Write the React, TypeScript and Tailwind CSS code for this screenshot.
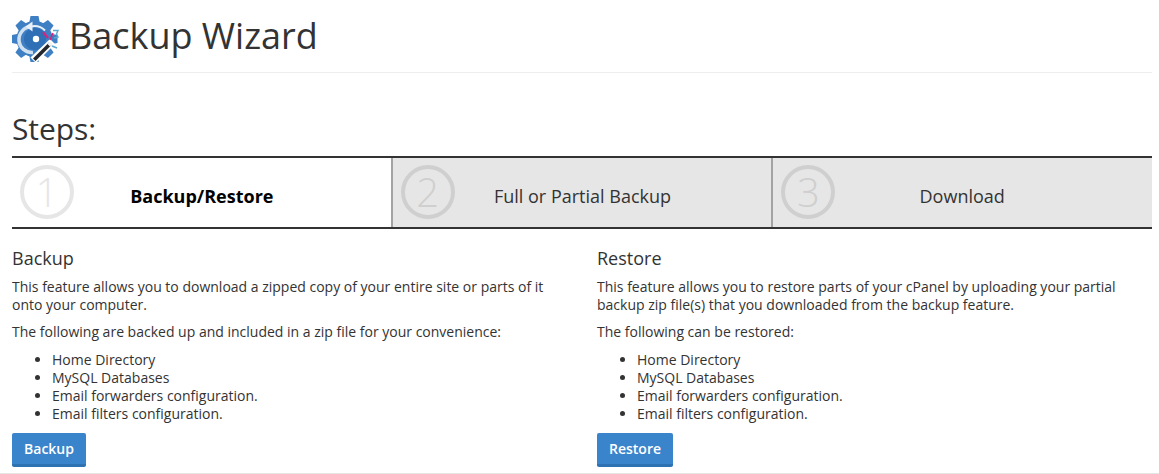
const font = { fontFamily: '"Open Sans", sans-serif' };

function GearIcon() {
  const teeth = [0, 45, 90, 135, 180, 225, 270, 315];
  return (
    <svg width="50" height="50" viewBox="0 0 50 50" className="mt-[4px] shrink-0">
      {teeth.map((a) => (
        <path key={a} d="M18.5 1h8l1.5 8h-11z" fill="#3f7fc4" transform={`rotate(${a} 22.5 24)`} />
      ))}
      <circle cx="22.5" cy="24" r="18" fill="#3f7fc4" />
      <circle cx="23" cy="24" r="11" fill="#2f6fb6" />
      <path d="M19 11.5A13 13 0 0 0 21 37.5" fill="none" stroke="#cfe0f1" strokeWidth="3.5" />
      <path d="M20.5 6.5v10l-7-5z" fill="#e8f0f8" />
      <path d="M19 11.5c5-1 10 0 14 4" fill="none" stroke="#e8f0f8" strokeWidth="2" />
      <circle cx="24" cy="24" r="3.2" fill="#fff" />
      <path d="M38 24l5 5L24 48l-5.500-5.500z" fill="#fff" />
      <path d="M37 27.500l2.500 2.500L23.500 46 21 43.500z" fill="#23262b" />
      <path d="M35.500 29l2.500 2.500 2.500-2.500-2.500-2.500z" fill="#f4f4f4" />
      <path d="M31 17l5 6" stroke="#d6247c" strokeWidth="2" fill="none" />
      <path d="M41 18l-3 7" stroke="#d6247c" strokeWidth="1.6" fill="none" />
      <path d="M41 15.500h5l-1.500 3.500 1.500 3-4 1" stroke="#58a9cf" strokeWidth="1.4" fill="none" />
      <path d="M40 31l5 2" stroke="#58a9cf" strokeWidth="1.6" fill="none" />
    </svg>
  );
}

function Step({ n, label, active, first, offset }: { n: string; label: string; active?: boolean; first?: boolean; offset: string }) {
  return (
    <div className={`flex flex-1 items-center pl-[8px] ${active ? "bg-white" : "bg-[#e6e6e6]"} ${first ? "" : "border-l-2 border-[#a3a3a3]"}`}>
      <div className={`mb-[2px] flex h-[54px] w-[54px] shrink-0 items-center justify-center rounded-full border-[4px] text-[40px] font-light leading-none ${active ? "border-[#e6e6e6] text-[#e6e6e6]" : "border-[#cfcfcf] text-[#cfcfcf]"}`}>
        {n}
      </div>
      <div className={`flex-1 text-center text-[18px] leading-[24px] ${offset} ${active ? "font-bold text-black" : "text-[#333]"}`}>{label}</div>
    </div>
  );
}

function Column({ title, lines, intro, action, btnW }: { title: string; lines: string[]; intro: string; action: string; btnW: string }) {
  return (
    <div className="flex w-[585px] shrink-0 flex-col items-start pr-[15px]">
      <h3 className="text-[18px] leading-[20px] text-[#333]">{title}</h3>
      <div className="mt-[10px] text-[14px] leading-[18px] text-[#333]">
        {lines.map((l) => (
          <div key={l}>{l}</div>
        ))}
      </div>
      <p className="mt-[9px] text-[14px] leading-[18px] text-[#333]">{intro}</p>
      <ul className="mt-[10px] list-disc pl-[40px] text-[14px] leading-[18px] text-[#333]">
        <li>Home Directory</li>
        <li>MySQL Databases</li>
        <li>Email forwarders configuration.</li>
        <li>Email filters configuration.</li>
      </ul>
      <button className={`mt-[10px] h-[34px] ${btnW} rounded-[2px] border-b-[3px] border-[#2e72b4] bg-[#3a84cb] pt-[1px] text-[14px] font-semibold leading-none text-white`}>
        {action}
      </button>
    </div>
  );
}

export default function App() {
  return (
    <div style={font} className="h-[474px] w-[1159px] overflow-hidden bg-white">
      <div className="flex h-[473px] flex-col pl-[12px] pr-[7px]">
        <header className="flex h-[73px] items-start gap-[7px] border-b border-[#eeeeee] pt-[11px]">
          <GearIcon />
          <h1 className="text-[36px] leading-[50px] text-[#333]">Backup Wizard</h1>
        </header>
        <h2 className="mt-[36px] text-[30px] leading-[40px] tracking-[-0.1px] text-[#333]">Steps:</h2>
        <div className="mt-[7px] flex h-[73px] border-y-2 border-[#333]">
          <Step n="1" label="Backup/Restore" active first offset="pr-[61px] pt-[6px]" />
          <Step n="2" label="Full or Partial Backup" offset="pr-[61px] pt-[6px]" />
          <Step n="3" label="Download" offset="pr-[63px] pt-[6px]" />
        </div>
        <div className="mt-[19px] flex">
          <Column
            title="Backup"
            lines={["This feature allows you to download a zipped copy of your entire site or parts of it", "onto your computer."]}
            intro="The following are backed up and included in a zip file for your convenience:"
            action="Backup"
            btnW="w-[74px]"
          />
          <Column
            title="Restore"
            lines={["This feature allows you to restore parts of your cPanel by uploading your partial", "backup zip file(s) that you downloaded from the backup feature."]}
            intro="The following can be restored:"
            action="Restore"
            btnW="w-[76px]"
          />
        </div>
      </div>
      <div className="h-px bg-[#e5e5e5]" />
    </div>
  );
}
